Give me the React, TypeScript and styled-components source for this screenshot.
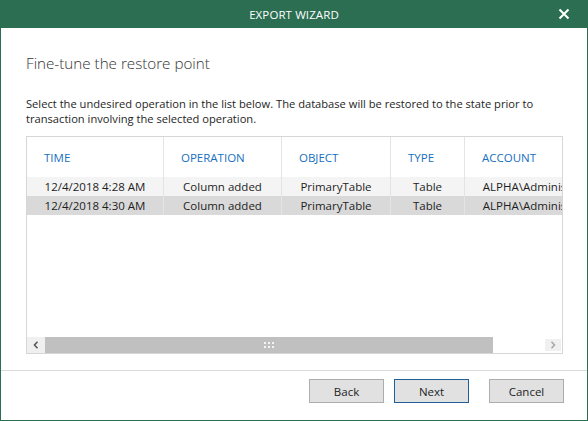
import styled, { createGlobalStyle } from "styled-components";

const GlobalStyle = createGlobalStyle`
  html, body {
    margin: 0;
    padding: 0;
    background: #ffffff;
  }
  body {
    font-family: "Open Sans", "Noto Sans", sans-serif;
    color: #1e1e1e;
  }
`;

const Window = styled.div`
  width: 588px;
  height: 421px;
  box-sizing: border-box;
  border: 1px solid #2b6e51;
  display: flex;
  flex-direction: column;
  background: #ffffff;
  overflow: hidden;
`;

const TitleBar = styled.div`
  height: 27px;
  background: #2b6e51;
  color: #ffffff;
  display: flex;
  align-items: center;
  justify-content: center;
  position: relative;
  font-size: 11.5px;
  letter-spacing: 0.1px;
`;

const CloseButton = styled.div`
  position: absolute;
  right: 17px;
  top: 7px;
  width: 12px;
  height: 12px;
  display: flex;
`;

const Main = styled.div`
  flex: 1;
  display: flex;
  flex-direction: column;
  padding: 25px 24px 16px 25px;
  min-height: 0;
`;

const Heading = styled.h1`
  margin: 0;
  font-size: 15.2px;
  font-weight: 300;
  line-height: 20px;
  color: #333333;
`;

const Description = styled.p`
  margin: 23px 0 0;
  font-size: 11.15px;
  line-height: 15px;
  color: #1e1e1e;
`;

const GridBox = styled.div`
  margin-top: 10px;
  flex: 1;
  border: 1px solid #d6d6d6;
  display: flex;
  flex-direction: column;
  overflow: hidden;
`;

const Rows = styled.div`
  flex: 1;
  overflow: hidden;
`;

const COLUMNS = "137px 118px 109px 74px 150px";

const HeaderRow = styled.div`
  display: grid;
  grid-template-columns: ${COLUMNS};
  height: 40px;
`;

const HeaderCell = styled.div<{ $last?: boolean }>`
  display: flex;
  align-items: center;
  padding-left: 17px;
  font-size: 11.5px;
  color: #1670c0;
  border-right: ${(p) => (p.$last ? "none" : "1px solid #e4e4e4")};
  white-space: nowrap;
  overflow: hidden;
`;

const DataRow = styled.div<{ $selected?: boolean }>`
  display: grid;
  grid-template-columns: ${COLUMNS};
  height: 19px;
  background: ${(p) => (p.$selected ? "#d9d9d9" : "#f4f4f4")};
`;

const DataCell = styled.div<{ $last?: boolean }>`
  display: flex;
  align-items: center;
  justify-content: center;
  font-size: 11.5px;
  color: #1e1e1e;
  border-right: ${(p) => (p.$last ? "none" : "1px solid #e4e4e4")};
  white-space: nowrap;
  overflow: hidden;
`;

const ScrollBar = styled.div`
  height: 16px;
  display: flex;
  align-items: stretch;
`;

const ScrollArrow = styled.div<{ $disabled?: boolean }>`
  width: ${(p) => (p.$disabled ? "16px" : "18px")};
  margin: ${(p) => (p.$disabled ? "2px 1px 2px 0" : "0")};
  background: #f0f0f0;
  display: flex;
  align-items: center;
  justify-content: center;
  color: ${(p) => (p.$disabled ? "#a8a8a8" : "#5a5a5a")};
`;

const Thumb = styled.div`
  width: 448px;
  background: #c0c0c0;
  display: flex;
  align-items: center;
  justify-content: center;
`;

const Track = styled.div`
  flex: 1;
  background: #ffffff;
`;

const Gripper = styled.div`
  display: grid;
  grid-template-columns: repeat(3, 2px);
  grid-auto-rows: 2px;
  gap: 2px;
  span {
    background: #f4f4f4;
  }
`;

const Footer = styled.div`
  height: 41px;
  border-top: 1px solid #dadada;
  display: flex;
  justify-content: flex-end;
  align-items: flex-start;
  padding: 8px 23px 0 0;
  gap: 10px;
`;

const Button = styled.button<{ $default?: boolean; $spaced?: boolean }>`
  width: 75px;
  height: 24px;
  box-sizing: border-box;
  margin-left: ${(p) => (p.$spaced ? "10px" : "0")};
  background: #e1e1e1;
  border: 1px solid ${(p) => (p.$default ? "#1f5f95" : "#adadad")};
  font-family: "Open Sans", "Noto Sans", sans-serif;
  font-size: 11.5px;
  color: #1e1e1e;
  padding: 0;
`;

const columns = ["TIME", "OPERATION", "OBJECT", "TYPE", "ACCOUNT"];

const operations = [
  { time: "12/4/2018 4:28 AM", op: "Column added", obj: "PrimaryTable", type: "Table", account: "ALPHA\\Administrator", selected: false },
  { time: "12/4/2018 4:30 AM", op: "Column added", obj: "PrimaryTable", type: "Table", account: "ALPHA\\Administrator", selected: true },
];

function Chevron({ dir }: { dir: "left" | "right" }) {
  return (
    <svg width="6" height="8" viewBox="0 0 6 8">
      <path
        d={dir === "left" ? "M4.5 0.8 L1.5 4 L4.5 7.2" : "M1.5 0.8 L4.5 4 L1.5 7.2"}
        fill="none"
        stroke="currentColor"
        strokeWidth="1.6"
      />
    </svg>
  );
}

export default function App() {
  return (
    <>
      <GlobalStyle />
      <Window>
        <TitleBar>
          EXPORT WIZARD
          <CloseButton>
            <svg width="12" height="12" viewBox="0 0 12 12">
              <path d="M1.5 1.5 L10.5 10.5 M10.5 1.5 L1.5 10.5" stroke="#ffffff" strokeWidth="2" />
            </svg>
          </CloseButton>
        </TitleBar>
        <Main>
          <Heading>Fine-tune the restore point</Heading>
          <Description>
            Select the undesired operation in the list below. The database will be restored to the state prior to
            <br />
            transaction involving the selected operation.
          </Description>
          <GridBox>
            <Rows>
              <HeaderRow>
                {columns.map((c, i) => (
                  <HeaderCell key={c} $last={i === columns.length - 1}>
                    {c}
                  </HeaderCell>
                ))}
              </HeaderRow>
              {operations.map((r) => (
                <DataRow key={r.time} $selected={r.selected}>
                  <DataCell>{r.time}</DataCell>
                  <DataCell>{r.op}</DataCell>
                  <DataCell>{r.obj}</DataCell>
                  <DataCell>{r.type}</DataCell>
                  <DataCell $last>{r.account}</DataCell>
                </DataRow>
              ))}
            </Rows>
            <ScrollBar>
              <ScrollArrow>
                <Chevron dir="left" />
              </ScrollArrow>
              <Thumb>
                <Gripper>
                  {Array.from({ length: 6 }).map((_, i) => (
                    <span key={i} />
                  ))}
                </Gripper>
              </Thumb>
              <Track />
              <ScrollArrow $disabled>
                <Chevron dir="right" />
              </ScrollArrow>
            </ScrollBar>
          </GridBox>
        </Main>
        <Footer>
          <Button>Back</Button>
          <Button $default>Next</Button>
          <Button $spaced>Cancel</Button>
        </Footer>
      </Window>
    </>
  );
}
